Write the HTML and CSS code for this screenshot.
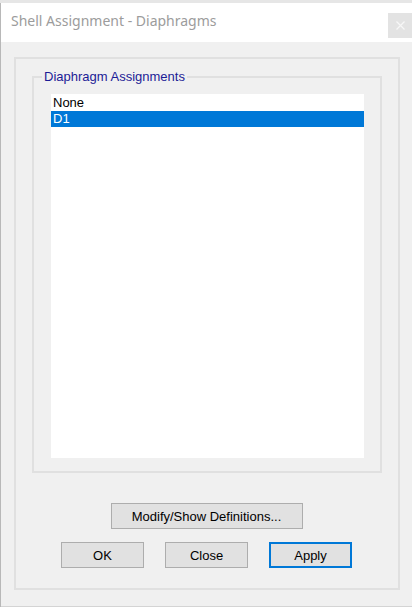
FILE: index.html
```html
<!DOCTYPE html>
<html lang="en">
<head>
    <meta charset="UTF-8">
    <meta name="viewport" content="width=device-width, initial-scale=1.0">
    <title>Shell Assignment - Diaphragms</title>
    <link rel="stylesheet" href="styles.css">
</head>
<body>
    <div class="window">
        <div class="titlebar">
            <span class="title">Shell Assignment - Diaphragms</span>
            <div class="close-btn">
                <svg width="9" height="9" viewBox="0 0 9 9"><path d="M0.5 0.5 L8.5 8.5 M8.5 0.5 L0.5 8.5" stroke="#f7f7f7" stroke-width="1.2"/></svg>
            </div>
        </div>

        <div class="dialog-body">
            <div class="panel">
                <div class="group-box">
                    <span class="legend">Diaphragm Assignments</span>
                    <div class="list-box">
                        <div class="list-item">None</div>
                        <div class="list-item selected">D1</div>
                    </div>
                </div>

                <div class="button-row single">
                    <button class="btn wide">Modify/Show Definitions...</button>
                </div>
                <div class="button-row">
                    <button class="btn">OK</button>
                    <button class="btn">Close</button>
                    <button class="btn default">Apply</button>
                </div>
            </div>
        </div>
    </div>
</body>
</html>
```

FILE: styles.css
```css
body {
    margin: 0;
    background-color: #e6e6e6;
    font-family: "Liberation Sans", Arial, sans-serif;
    font-size: 13px;
}
.window {
    margin-top: 3px;
    width: 412px;
    height: 604px;
    border-left: 1px solid #b8b8b8;
    box-sizing: border-box;
    background-color: #f0f0f0;
    display: flex;
    flex-direction: column;
}
.titlebar {
    height: 39px;
    background-color: #ffffff;
    display: flex;
    align-items: flex-start;
    justify-content: space-between;
}
.title {
    font-family: "Noto Sans", "Open Sans", sans-serif;
    font-size: 14px;
    color: #9c9c9c;
    margin-left: 10px;
    margin-top: 8px;
}
.close-btn {
    width: 24px;
    height: 25px;
    margin-top: 10px;
    background-color: #e3e3e3;
    display: flex;
    align-items: center;
    justify-content: center;
}
.dialog-body {
    flex: 1;
    padding: 15px 12px 16px 13px;
    border-bottom: 1px solid #d4d4d4;
}
.panel {
    height: 533px;
    box-sizing: border-box;
    border: 2px solid #e0e0e0;
    padding: 17px 16px 20px 16px;
}
.group-box {
    position: relative;
    height: 397px;
    box-sizing: border-box;
    border: 2px solid #e0e0e0;
    padding: 16px 16px 13px 17px;
}
.legend {
    position: absolute;
    top: -8px;
    left: 8px;
    padding: 0 2px;
    background-color: #f0f0f0;
    color: #1c1c96;
    line-height: 14px;
}
.list-box {
    height: 364px;
    background-color: #ffffff;
    padding-top: 1px;
    box-sizing: border-box;
}
.list-item {
    height: 16px;
    line-height: 16px;
    padding-left: 2px;
    color: #000000;
}
.list-item.selected {
    background-color: #0078d7;
    color: #ffffff;
}
.button-row {
    display: flex;
    justify-content: center;
    gap: 21px;
    margin-top: 13px;
    padding-right: 1px;
}
.button-row.single {
    margin-top: 30px;
}
.btn {
    width: 83px;
    height: 26px;
    margin: 0;
    padding: 0;
    background-color: #e1e1e1;
    border: 1px solid #adadad;
    font-family: "Liberation Sans", Arial, sans-serif;
    font-size: 13px;
    color: #000000;
}
.btn.wide {
    width: 192px;
}
.btn.default {
    border: 2px solid #0078d7;
}
```
